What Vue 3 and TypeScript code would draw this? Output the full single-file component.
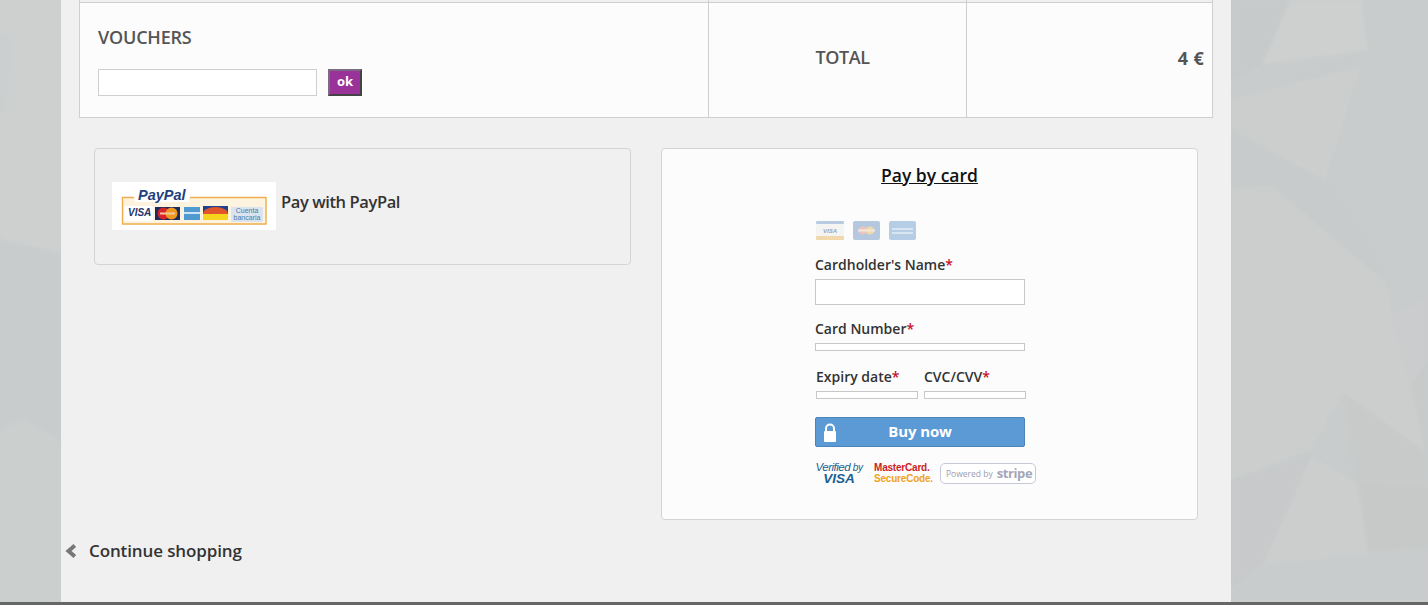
<script setup lang="ts">
interface Poly { p: string; c: string }
const rightPolys: Poly[] = [
  { p: '0,0 59,0 32,64 0,83', c: '#c7cacb' },
  { p: '59,0 130,0 137,50 32,64', c: '#cdd0ce' },
  { p: '32,64 137,50 0,100 0,83', c: '#c9cccc' },
  { p: '0,100 130,66 94,181 0,129', c: '#cbcecd' },
  { p: '0,129 94,181 154,282 100,240 40,185 0,189', c: '#c7cbcb' },
  { p: '0,189 40,185 154,282 194,452 112,392 80,450 0,480', c: '#cbcecc' },
  { p: '112,392 194,452 197,482 125,482', c: '#c8cac9' },
  { p: '160,316 197,297 197,452 180,385', c: '#cacccd' },
  { p: '180,385 197,360 197,452', c: '#c7cac9' },
  { p: '80,456 125,482 137,554 32,564', c: '#cbcecd' },
  { p: '0,480 80,456 32,564 0,587', c: '#c7c9ca' },
  { p: '128,483 197,485 197,548 137,552', c: '#c7c9c8' },
  { p: '0,590 32,564 137,554 197,548 197,602 0,602', c: '#c9cccd' }
]
const leftPolys: Poly[] = [
  { p: '0,0 61,0 61,253 0,239', c: '#cdd0cf' },
  { p: '0,35 15,33 5,110 0,120', c: '#cbcfd0' },
  { p: '0,239 61,253 61,442 25,420 0,430', c: '#c8cccd' },
  { p: '0,430 25,420 61,442 61,602 0,602', c: '#cbcfce' }
]
</script>

<template>
  <div class="page">
    <div class="columns">
      <svg class="side side-left" viewBox="0 0 61 602" aria-hidden="true">
        <rect width="61" height="602" fill="#cbcecd" />
        <g class="soft">
          <polygon v-for="(s, i) in leftPolys" :key="i" :points="s.p" :fill="s.c" />
        </g>
      </svg>

      <main class="main">
        <div class="cart">
          <div class="stub"></div><div class="stub"></div><div class="stub stub-last"></div>
          <div class="cell cell-voucher">
            <h3 class="voucher-title">VOUCHERS</h3>
            <div class="voucher-row">
              <input class="voucher-input" type="text" />
              <button class="voucher-btn" type="button">ok</button>
            </div>
          </div>
          <div class="cell cell-total">TOTAL</div>
          <div class="cell cell-amount">4 €</div>
        </div>

        <div class="payments">
          <section class="panel panel-paypal">
            <svg class="paypal-img" width="164" height="48" viewBox="0 0 164 48">
              <rect width="164" height="48" fill="#fff" />
              <path d="M22 15.5H10.5V42H154V15.5H78" fill="#fdf3df" stroke="#eead4e" stroke-width="1.4" />
              <path d="M23 8H77V20H23Z" fill="#fff" />
              <rect x="12" y="24" width="29" height="15" fill="#fff" />
              <text x="26" y="18" class="pp-logo">PayPal</text>
              <text x="16" y="34" class="pp-visa">VISA</text>
              <rect x="43" y="25" width="25" height="13" fill="#1c2b5a" />
              <circle cx="51.5" cy="31.5" r="6" fill="#d8232a" />
              <circle cx="59.5" cy="31.5" r="6" fill="#f0971e" />
              <rect x="48" y="30.5" width="15" height="2" fill="#f6c6a0" />
              <rect x="72" y="25" width="16" height="13" fill="#4f9ad0" />
              <rect x="72" y="30" width="16" height="2" fill="#cfe4f2" />
              <rect x="91" y="24" width="25" height="14" fill="#23408f" />
              <path d="M91 32a12.500 7 0 0 1 25 0Z" fill="#e0552a" />
              <rect x="91" y="32" width="25" height="6" fill="#f6d41e" />
              <rect x="119" y="25" width="32" height="15" fill="#dbe4ee" />
              <text x="135" y="31" class="pp-small">Cuenta</text>
              <text x="135" y="38" class="pp-small">bancaria</text>
            </svg>
            <span class="paypal-label">Pay with PayPal</span>
          </section>

          <section class="panel panel-card">
            <h2 class="card-title">Pay by card</h2>
            <form class="card-form" @submit.prevent>
              <div class="card-icons">
                <svg width="28" height="19" viewBox="0 0 28 19">
                  <rect width="28" height="19" rx="2" fill="#f4f4f2" />
                  <rect width="28" height="3" rx="1" fill="#b9cbe0" />
                  <rect y="15" width="28" height="4" rx="1" fill="#f2d9ad" />
                  <text x="14" y="12" class="mini-visa">VISA</text>
                </svg>
                <svg width="27" height="19" viewBox="0 0 27 19">
                  <rect width="27" height="19" rx="2" fill="#b5c8e0" />
                  <circle cx="10" cy="9.5" r="4" fill="#eec3bb" />
                  <circle cx="17" cy="9.5" r="4" fill="#f0d9a8" />
                  <rect x="5" y="8.500" width="17" height="2" fill="#f1e9dc" />
                </svg>
                <svg width="27" height="19" viewBox="0 0 27 19">
                  <rect width="27" height="19" rx="2" fill="#b5cee6" />
                  <rect x="3" y="7" width="21" height="2" fill="#d7e5f1" />
                  <rect x="3" y="11" width="21" height="2" fill="#d7e5f1" />
                </svg>
              </div>

              <label class="field-label label-name">Cardholder's Name<em>*</em></label>
              <input class="field field-name" type="text" />

              <label class="field-label label-number">Card Number<em>*</em></label>
              <div class="field field-thin"></div>

              <div class="split">
                <div class="split-col">
                  <label class="field-label">Expiry date<em>*</em></label>
                  <div class="field field-thin"></div>
                </div>
                <div class="split-col">
                  <label class="field-label">CVC/CVV<em>*</em></label>
                  <div class="field field-thin"></div>
                </div>
              </div>

              <button class="buy" type="submit">
                <svg class="lock" width="14" height="19" viewBox="0 0 14 19">
                  <path d="M3 9V5.500a4 4 0 0 1 8 0V9" fill="none" stroke="#fff" stroke-width="2" />
                  <rect x="1" y="8" width="12" height="11" rx="1" fill="#fff" />
                </svg>
                <span>Buy now</span>
              </button>

              <div class="badges">
                <div class="badge-visa"><span class="v1">Verified <small>by</small></span><span class="v2">VISA</span></div>
                <div class="badge-mc"><span class="m1">MasterCard.</span><span class="m2">SecureCode.</span></div>
                <div class="badge-stripe"><span class="s1">Powered by</span><span class="s2">stripe</span></div>
              </div>
            </form>
          </section>
        </div>

        <a class="continue" href="#" @click.prevent>
          <svg width="12" height="14" viewBox="0 0 12 14">
            <path d="M9.800 1.500 3.500 7l6.300 5.500" fill="none" stroke="#777" stroke-width="4" />
          </svg>
          <span>Continue shopping</span>
        </a>
      </main>

      <svg class="side side-right" viewBox="0 0 197 602" aria-hidden="true">
        <rect width="197" height="602" fill="#c9cccc" />
        <g class="soft">
          <polygon v-for="(s, i) in rightPolys" :key="i" :points="s.p" :fill="s.c" />
        </g>
      </svg>
    </div>
    <div class="footer-line"></div>
  </div>
</template>

<style>
html, body { margin: 0; padding: 0; overflow: hidden; }
</style>

<style scoped>
.page {
  width: 1428px;
  height: 605px;
  display: flex;
  flex-direction: column;
  overflow: hidden;
  font-family: "Open Sans", "Noto Sans", sans-serif;
  color: #333;
}
.columns { display: flex; height: 602px; }
.side { display: block; height: 602px; flex: none; }
.side-left { width: 61px; }
.side-right { width: 197px; }
.soft { filter: blur(1.5px); }
.footer-line { height: 3px; background: #666; }
.main {
  width: 1170px;
  flex: none;
  box-sizing: border-box;
  background: #f0f0f0;
  padding: 0 18px;
}
.cart {
  display: grid;
  grid-template-columns: 629px 258px 247px;
  grid-template-rows: 2px 116px;
  color: #555;
}
.stub { border-left: 1px solid #cfcfcf; }
.stub-last { border-right: 1px solid #cfcfcf; }
.cell {
  box-sizing: border-box;
  background: #fcfcfc;
  border-top: 1px solid #cfcfcf;
  border-bottom: 1px solid #cfcfcf;
  border-left: 1px solid #cfcfcf;
}
.cell-voucher { padding: 23px 18px 0; }
.voucher-title { margin: 0; font-size: 18px; line-height: 22px; font-weight: 600; letter-spacing: -0.2px; }
.voucher-row { display: flex; gap: 11px; margin-top: 21px; }
.voucher-input {
  box-sizing: border-box;
  width: 219px;
  height: 27px;
  margin: 0;
  background: #fff;
  border: 1px solid #cfcfcf;
}
.voucher-btn {
  box-sizing: border-box;
  width: 34px;
  height: 27px;
  padding: 0 0 3px;
  background: #993399;
  color: #fff;
  border: 2px solid;
  border-color: #7d6a80 #444 #444 #7d6a80;
  font: 700 13px "Open Sans", sans-serif;
}
.cell-total {
  display: flex;
  align-items: center;
  justify-content: center;
  padding: 0 0 6px 10px;
  font-size: 18px;
  font-weight: 600;
  letter-spacing: -0.4px;
}
.cell-amount {
  display: flex;
  align-items: center;
  justify-content: flex-end;
  padding: 0 8px 5px 0;
  border-right: 1px solid #cfcfcf;
  font-size: 18px;
  font-weight: 700;
  letter-spacing: 0.3px;
}
.payments {
  display: flex;
  align-items: flex-start;
  gap: 30px;
  margin: 30px 15px 0;
}
.panel {
  box-sizing: border-box;
  width: 537px;
  border: 1px solid #d4d4d4;
  border-radius: 4px;
}
.panel-paypal {
  height: 117px;
  display: flex;
  align-items: flex-start;
  gap: 5px;
  padding: 33px 17px 0;
  background: #f0f0f0;
}
.paypal-img { display: block; flex: none; }
.pp-logo { font: italic 700 14.5px "Liberation Sans", sans-serif; fill: #1f3f7d; }
.pp-visa { font: italic 700 10px "Liberation Sans", sans-serif; fill: #27346a; }
.pp-small { font: 7px "Liberation Sans", sans-serif; fill: #4a7aa8; text-anchor: middle; }
.paypal-label {
  font-size: 16.5px;
  line-height: 40px;
  letter-spacing: -0.4px;
  font-weight: 600;
}
.panel-card {
  height: 372px;
  background: #fcfcfc;
}
.card-title {
  margin: 14px 0 0;
  text-align: center;
  font-size: 17.5px;
  line-height: 24px;
  font-weight: 600;
  color: #111;
  text-decoration: underline;
}
.card-form {
  display: flex;
  flex-direction: column;
  width: 222px;
  margin: 34px 0 0 153px;
}
.card-icons { display: flex; gap: 9px; padding-left: 1px; height: 19px; }
.card-icons svg { display: block; }
.mini-visa { font: italic 700 6px "Liberation Sans", sans-serif; fill: #9aa7bd; text-anchor: middle; }
.field-label {
  display: block;
  font-size: 14px;
  line-height: 20px;
  font-weight: 600;
  color: #333;
  white-space: nowrap;
}
.field-label em { font-style: normal; color: #c8102e; }
.label-name { margin-top: 15px; }
.field {
  box-sizing: border-box;
  margin: 0;
  padding: 0;
  background: #fff;
  border: 1px solid #c8c8c8;
}
.field-name { display: block; width: 210px; height: 26px; margin-top: 4px; }
.label-number { margin-top: 14px; }
.label-number + .field-thin { margin-top: 4px; }
.field-thin { width: 100%; height: 8px; }
.card-form > .field-thin { width: 210px; }
.split { display: flex; gap: 6px; margin-top: 16px; padding-left: 1px; width: 210px; }
.split-col { width: 102px; flex: none; }
.split-col .field-thin { margin-top: 4px; }
.buy {
  position: relative;
  box-sizing: border-box;
  width: 210px;
  height: 30px;
  margin-top: 18px;
  padding: 0 0 2px;
  background: #5b9ad5;
  border: 1px solid #4a84b8;
  border-radius: 2px;
  color: #fff;
  font: 700 15px "Open Sans", sans-serif;
  letter-spacing: -0.1px;
}
.lock { position: absolute; left: 7px; top: 5px; }
.badges { display: flex; align-items: center; margin-top: 14px; height: 24px; }
.badge-visa {
  display: flex;
  flex-direction: column;
  align-items: center;
  width: 48px;
  font-family: "Liberation Sans", sans-serif;
  font-style: italic;
  color: #1a5f94;
  line-height: 11px;
}
.v1 { font-size: 11.5px; letter-spacing: -0.5px; white-space: nowrap; }
.v1 small { font-size: 10px; }
.v2 { font-size: 13.5px; font-weight: 700; line-height: 12px; }
.badge-mc {
  display: flex;
  flex-direction: column;
  margin-left: 11px;
  width: 55px;
  font-family: "Liberation Sans", sans-serif;
  font-weight: 700;
  font-size: 10px;
  line-height: 11.5px;
  letter-spacing: -0.2px;
  white-space: nowrap;
}
.m1 { color: #cc1f1f; }
.m2 { color: #f0a21c; }
.badge-stripe {
  box-sizing: border-box;
  display: flex;
  align-items: center;
  gap: 4px;
  height: 21px;
  width: 96px;
  margin-left: 11px;
  padding-left: 5px;
  background: #fff;
  border: 1px solid #c6c9d6;
  border-radius: 5px;
  color: #9a9db0;
  white-space: nowrap;
}
.s1 { font-size: 8.5px; }
.s2 { font-size: 13px; font-weight: 700; letter-spacing: -0.4px; color: #a3a6b8; }
.continue {
  display: flex;
  align-items: center;
  gap: 12px;
  margin: 19px 0 0 -14px;
  color: #333;
  text-decoration: none;
  font-size: 17px;
  line-height: 24px;
  font-weight: 600;
  letter-spacing: -0.12px;
}
.continue svg { display: block; flex: none; }
</style>
